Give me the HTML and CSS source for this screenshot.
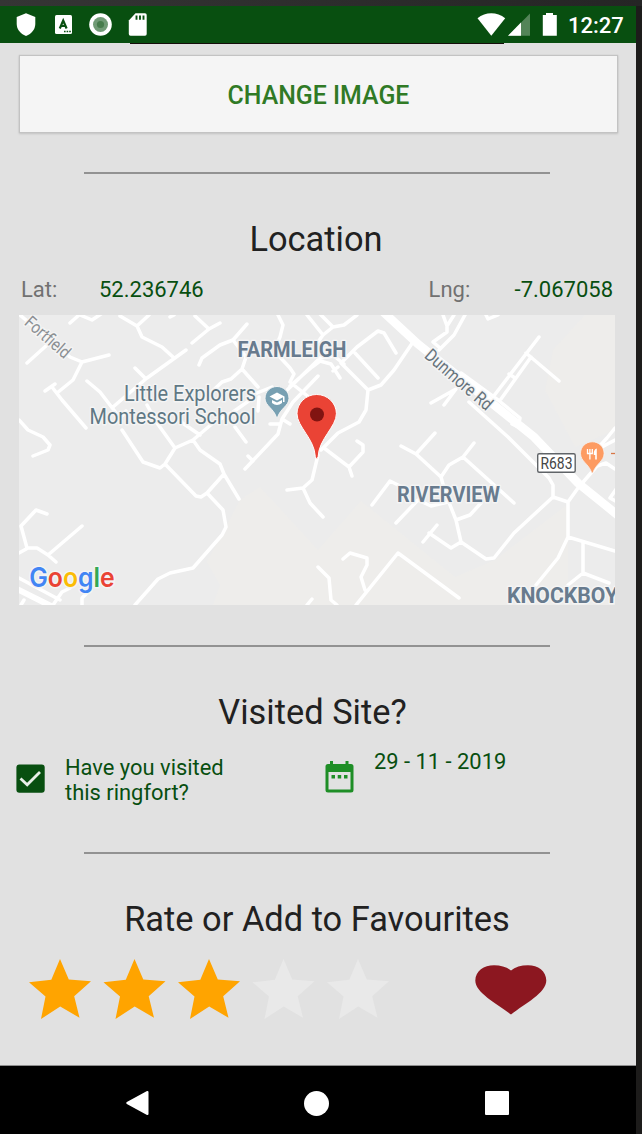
FILE: index.html
```
<!DOCTYPE html>
<html lang="en">
<head>
<meta charset="utf-8">
<title>Ringfort</title>
<link rel="stylesheet" href="styles.css">
</head>
<body>
<div class="device">
<div class="screen">
  <header class="status">
    <svg class="status-left" width="160" height="37" viewBox="0 6 160 37">
      <path fill="#fff" d="M26 13.3 35.3 17v7c0 5-3.5 9.8-9.3 12-5.800-2.200-9.300-7-9.300-12v-7z"/>
      <rect x="55" y="15" width="17" height="19" rx="1.500" fill="#fff"/>
      <path fill="none" stroke="#084f10" stroke-width="2.200" d="M59.800 28.500 63.200 20.500 66.600 28.500M61 26h4.500"/>
      <path stroke="#084f10" stroke-width="1.300" stroke-dasharray="1.600 1" d="M64 31.500h7"/>
      <circle cx="100.500" cy="24.500" r="11.300" fill="#fff"/>
      <circle cx="100.500" cy="24.500" r="7.500" fill="#719b76"/>
      <circle cx="100.500" cy="24.500" r="3.600" fill="#477c4c"/>
      <path fill="#fff" d="M135.500 13.300h9.500q1.700 0 1.700 1.700v19q0 1.700-1.700 1.700h-14.500q-1.700 0-1.700-1.700V20.500z"/>
      <path stroke="#084f10" stroke-width="1.900" d="M136.500 15.500v4.300M140 15.500v4.300M143.500 15.500v4.300"/>
    </svg>
    <div class="status-right">
      <svg width="82" height="37" viewBox="476 6 82 37">
        <path fill="#fff" d="M477.500 18.300C485.500 11.500 497 11.500 505.200 18.300L491.300 35.700z"/>
        <path fill="#538458" d="M530 13.500V35.700H508z"/>
        <path fill="#fff" d="M521 22.500V35.700H508z"/>
        <path fill="#fff" d="M546 13h7v2h3.800v20.700h-14V15h3.200z"/>
      </svg>
      <span class="clock">12:27</span>
    </div>
  </header>
  <main class="content">
    <div class="photo-edge"></div>
    <button class="change" type="button">CHANGE IMAGE</button>
    <hr class="rule">
    <h2 class="heading">Location</h2>
    <div class="coords">
      <span class="label">Lat:</span><span class="value">52.236746</span>
      <span class="label lng">Lng:</span><span class="value">-7.067058</span>
    </div>
    <svg class="map" width="596" height="290" viewBox="19 315 596 290">
      <rect x="19" y="315" width="596" height="290" fill="#ececec"/>
      <path fill="#eeedeb" d="M260 487 318 550 361 501 455 577 495 560 568 504V585L615 605H213L220 585 207 562 240 500zM585 315H615V430L575 447 545 390 553 350z"/>
      <g class="roads">
        <path d="M70 323 79 315M80 315 92 320 101 314M120 316 137 326 149 315M137 326 142 337 162 347 173 357M186 350 147 378 127 395 113 407M170 317 174 315M195 316 209 329M192 343 209 329 220 323M247 324 233 340 220 345 202 358 199 365M27 363 47 345M20 315 70 357 82 362 109 355M82 362 73 380 57 393M45 391 55 384M52 387 62 400 86 428M87 381 100 392 120 418 126 411M135 368 145 378"/>
        <path d="M122 430 143 462 160 468 165 464 175 448 193 440 213 423 233 412 250 400M147 405 157 423 175 448M181 422 200 435M165 464 196 496 201 497 207 493 224 474 220 464 200 450 193 440M224 474 239 499M207 493 223 510 226 527 222 535 193 568 170 573 158 579 135 605M19 420 28 430 43 437 50 445 48 450 33 456M19 553 28 548 37 548 48 555 56 562M48 555 82 526M27 548 21 526 36 510 47 514M19 578 60 600M53 605 62 592 70 588M82 605V598L87 593M21 605 24 600"/>
        <path d="M235 427 246 442M245 469 278 434 282 419 293 402 318 376M248 456 253 461M270 424H280M282 419 290 424M278 315 283 325 280 337 275 348 278 355 290 368 294 374 290 382 310 398M242 369 246 357 233 340M203 400 222 382 231 379 242 369 258 387M259 397 258 411M257 393 272 387M290 386 312 367 320 361 331 364 340 378M333 371 338 367M280 397 320 358 334 356 344 364M307 315 323 335 333 327 320 314M333 327 344 325 357 315M323 335 318 342M341 363 357 347 378 331 384 333 396 353M355 353 378 378M341 363 368 390 366 410 359 422 338 433 321 450M368 390 381 385 394 370 413 342"/>
        <path d="M443 315 447 326V332L433 342 440 348M454 315 447 326M465 315 454 335 439 350M486 315 488 319 498 315M493 397 539 337M501 399 531 357M526 353 559 381M509 374 515 378M461 373 498 400 520 418 518 427 512 424M431 403 456 389 444 405M469 402 508 437 549 478 553 485V497L568 502 578 488 597 466 606 463 615 469M568 502V537L558 558 536 585M568 537 615 551M583 542V573L568 585M583 573 609 583M553 497 514 533 494 558 486 559 461 542 456 520 446 495 441 477 416 454 401 446M416 454 435 433M441 477 449 465 463 457 474 443M463 457 514 503M456 520 470 515 481 503M372 505 390 481 402 487M396 523 418 500 431 506 448 502M461 542 451 548 429 533M423 542 437 525M356 605 398 553 459 598M343 559 350 553 367 558V565L361 577 365 590M324 448 349 467 352 476M349 467 363 452V445L357 441M318 455 312 480 303 488 287 490M303 488 310 503 323 517M318 567 329 578 331 600 337 605M307 605 312 599M596 450 607 438 615 428M600 448 615 440M617 488 610 498 617 502"/>
      </g>
      <path class="road-wide" d="M379 308 418 344 534 437 578 483 620 517"/>
      <path class="road-main" d="M15 588 55 608"/>
      <g class="place">
        <text x="237.500" y="356.500" textLength="109" lengthAdjust="spacingAndGlyphs">FARMLEIGH</text>
        <text x="397" y="501.500" textLength="103" lengthAdjust="spacingAndGlyphs">RIVERVIEW</text>
        <text x="507" y="603" textLength="111" lengthAdjust="spacingAndGlyphs">KNOCKBOY</text>
      </g>
      <g class="poi">
        <text x="124" y="401" textLength="132" lengthAdjust="spacingAndGlyphs">Little Explorers</text>
        <text x="89.500" y="424" textLength="166" lengthAdjust="spacingAndGlyphs">Montessori School</text>
      </g>
      <g class="street">
        <text class="faint" transform="translate(23.500 324) rotate(41)" textLength="54" lengthAdjust="spacingAndGlyphs">Fortfield</text>
        <text transform="translate(423.500 357) rotate(41)" textLength="83" lengthAdjust="spacingAndGlyphs">Dunmore Rd</text>
      </g>
      <path fill="#78a0b2" stroke="#f4f4f4" d="M277 386.500c-6.500 0-12 5-12 11.800 0 7.700 8.500 9.700 11.500 19.200h1c3-9.500 11.500-11.500 11.500-19.200 0-6.800-5.500-11.800-12-11.800z"/>
      <path fill="#fff" d="M277 392.500 269.500 396.500 277 400.500 283 397.300V402h1.500v-5.500zM272 400v3q5 4 10 0v-3l-5 2.600z"/>
      <path fill="#ea4335" stroke="#fff" stroke-width="1" d="M316.700 394.500c-10.800 0-19.700 8.500-19.700 19.200 0 13 17.500 25 18.300 43q1.400 4 2.800 0c.800-18 18.300-30 18.300-43 0-10.700-8.900-19.200-19.700-19.200z"/>
      <circle cx="317" cy="414.500" r="7" fill="#811411"/>
      <rect x="537.700" y="453.700" width="37.500" height="18.600" rx="1.500" fill="#fff" stroke="#606468" stroke-width="1.400"/>
      <text class="route" x="540.500" y="468.700" textLength="32" lengthAdjust="spacingAndGlyphs">R683</text>
      <path fill="#fd9b62" stroke="#f4f4f4" stroke-width=".8" d="M592.300 441.800c-6.500 0-11.800 5-11.800 11.600 0 8 8.500 10.500 11.300 19.600h1c2.800-9.100 11.300-11.600 11.300-19.600 0-6.600-5.300-11.600-11.800-11.600z"/>
      <path fill="none" stroke="#fff" stroke-width="1.300" d="M587.500 449v4.500h4.800V449M589.900 449v10.500"/>
      <path fill="#fff" d="M596.800 448.500v11h-1.600v-4.500h-1.400c-.3-3.500.5-6 3-6.500z"/>
      <path stroke="#d87748" stroke-width="1.300" d="M611 453.500h5"/>
      <text class="wordmark" x="29.200" y="586.500" textLength="85.500" lengthAdjust="spacingAndGlyphs"><tspan class="b">G</tspan><tspan class="r">o</tspan><tspan class="y">o</tspan><tspan class="b">g</tspan><tspan class="g">l</tspan><tspan class="r">e</tspan></text>
    </svg>
    <hr class="rule">
    <h2 class="heading visited">Visited Site?</h2>
    <div class="visit">
      <svg class="check" width="29" height="29" viewBox="0 0 29 29"><rect x=".4" y=".4" width="28.300" height="28.300" rx="3" fill="#084f10"/><path d="M4.500 14.500 11.200 20.800 24 8" fill="none" stroke="#e8efe8" stroke-width="2.800"/></svg>
      <span class="question">Have you visited<br>this ringfort?</span>
      <svg class="calendar" width="29" height="32" viewBox="0 0 29 32"><path fill="#1e8e26" fill-rule="evenodd" d="M5 0h3v3h12.500V0h3v3H26q2.500 0 2.500 2.500V29q0 2.500-2.500 2.500H3Q.500 31.500.500 29V5.500Q.500 3 3 3h2zM3.500 11v17.500h22V11z"/><path fill="#1e8e26" d="M6.500 14h3.500v3.500H6.500zM12.700 14h3.500v3.500h-3.500zM19 14h3.500v3.500H19z"/></svg>
      <span class="date">29 - 11 - 2019</span>
    </div>
    <hr class="rule">
    <h2 class="heading rate">Rate or Add to Favourites</h2>
    <div class="rating">
      <svg width="360" height="60" viewBox="29 959 360 60">
        <defs><path id="star" d="M31 0 39.800 20.500 62 22.300 45.200 37.200 50.500 58.800 31.200 47.500 12 60 16.500 37.500 0 23.300 22.300 20.700z"/></defs>
        <g fill="#ffa400"><use href="#star" x="29" y="959"/><use href="#star" x="103.500" y="959"/><use href="#star" x="178" y="959"/></g>
        <g fill="#e9e9e9"><use href="#star" x="252.500" y="959"/><use href="#star" x="327" y="959"/></g>
      </svg>
      <svg width="72" height="50" viewBox="0 0 72 50"><path fill="#8c1720" d="M36 49.500C22 38.500 .3 28 .3 15.500.3 6 9 .2 19 .2 26 .2 32 2 36 5.500 40 2 46 .2 53 .2 63 .2 71.300 6 71.300 15.500 71.300 28 50 38.500 36 49.500z"/></svg>
    </div>
  </main>
  <nav class="navbar">
    <svg width="26" height="28" viewBox="0 0 26 28"><path d="M1.300 14 21.500 3V25z" fill="#fff" stroke="#fff" stroke-width="2" stroke-linejoin="round"/></svg>
    <span class="home"></span>
    <span class="recent"></span>
  </nav>
</div>
</div>
</body>
</html>
```
FILE: styles.css
```
* { box-sizing: border-box; }
body { margin: 0; background: #1d1c1b; font-family: Roboto, "Liberation Sans", sans-serif; }
.device { height: 1134px; padding: 6px 6px 0 0; overflow: hidden; background: linear-gradient(90deg, #353535, #252525) top / 100% 6px no-repeat, #1d1c1b; }
.screen { display: flex; flex-direction: column; width: 636px; height: 1128px; background: #e1e1e1; }
svg { display: block; flex: none; }
.status { display: flex; justify-content: space-between; flex: none; height: 37px; background: #084f10; }
.status-right { display: flex; padding-right: 13px; }
.clock { width: 65px; padding-left: 10px; color: #fff; font-size: 22px; font-weight: 500; line-height: 40px; white-space: nowrap; }
.content { display: flex; flex-direction: column; flex: none; height: 1023px; border-bottom: 1px solid #8d8d8d; }
.photo-edge { width: 374px; height: 1px; margin-left: 130px; background: #150d0a; }
.change { width: 597px; height: 76px; margin: 12px 0 0 20px; padding: 4px 0 0; border: 0; background: #f5f5f5; box-shadow: 0 0 1px 1px #c3c3c3, 0 1px 2px 1px #c4c4c4; color: #307a25; font: 500 24.900px/30px Roboto, "Liberation Sans", sans-serif; }
.rule { flex: none; width: 466px; height: 2px; margin: 40px 0 0 84px; border: 0; background: #929292; }
.heading { flex: none; height: 49px; margin: 41px 0 0; padding-right: 4px; color: #212121; font-size: 34.400px; font-weight: 400; line-height: 48px; text-align: center; }
.visited { padding-right: 11px; }
.rate { padding-right: 2px; }
.coords { display: flex; height: 39px; margin: 12px 23px 0 21px; color: #084f10; font-size: 22px; line-height: 27px; }
.label { width: 78px; color: #717171; }
.lng { width: 86px; margin-left: auto; }
.map { margin-left: 19px; }
.roads { fill: none; stroke: #fff; stroke-width: 3.500; stroke-linecap: round; stroke-linejoin: round; }
.road-wide { fill: none; stroke: #fff; stroke-width: 8.500; }
.road-main { fill: none; stroke: #fff; stroke-width: 6; }
.map text { paint-order: stroke; stroke: #f4f4f4; stroke-width: 3px; stroke-linejoin: round; }
.place { fill: #687b8e; font-size: 22px; font-weight: 700; }
.poi { fill: #607884; font-size: 22px; }
.street { fill: #66737c; font-size: 18px; }
.faint { fill: #8b8f93; font-size: 17.500px; }
.map .route { fill: #454545; stroke: none; font-size: 16px; font-weight: 400; }
.wordmark { font-family: Inter, sans-serif; font-size: 27px; font-weight: 600; }
.b { fill: #4285f4; }
.r { fill: #ea4335; }
.y { fill: #fbbc05; }
.g { fill: #34a853; }
.visit { display: flex; height: 60px; margin-top: 18px; color: #084f10; font-size: 21.900px; line-height: 25px; }
.check { margin: 9px 0 0 16px; }
.question { width: 260px; margin-left: 20px; }
.calendar { margin-top: 6px; }
.date { margin: -6px 0 0 20px; }
.visit + .rule { margin-top: 37px; }
.rating { display: flex; justify-content: space-between; margin: 15px 89px 0 29px; }
.rating svg:last-child { margin-top: 6px; }
.navbar { display: flex; align-items: center; flex: 1; padding: 6px 127px 0 126px; background: #000; }
.home { width: 25px; height: 25px; margin: 0 auto 0 152px; border-radius: 50%; background: #fff; }
.recent { width: 24px; height: 24px; border-radius: 1px; background: #fff; }
```
